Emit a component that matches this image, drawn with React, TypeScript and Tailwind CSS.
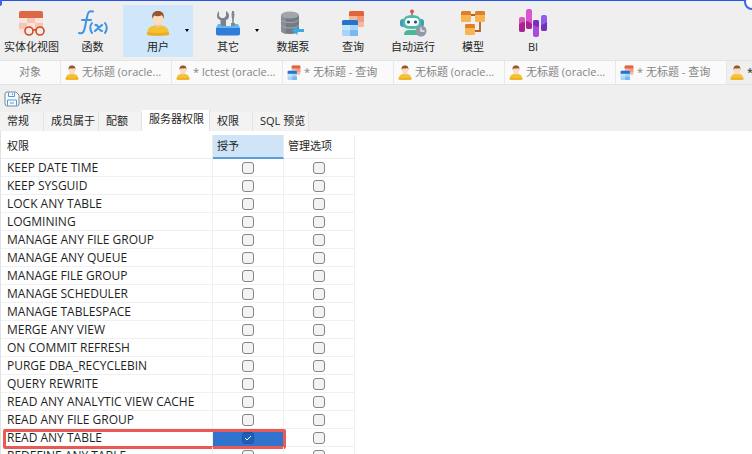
import type { ReactNode } from "react";

const PersonIcon = ({ className }: { className: string }) => (
  <svg viewBox="0 0 24 26" className={className} aria-hidden="true">
    <path d="M1 25c0-6 2-8.500 8-9.500h6c6 1 8 3.500 8 9.500q-11 1.500-22 0z" fill="#f5c22f" />
    <path d="M1.300 22c7 1.500 14.500 1.500 21.400 0l.3 3q-11 1.500-22 0z" fill="#e9ad1e" />
    <path d="M9 11h6v5q-3 3-6 0z" fill="#efc49c" />
    <ellipse cx="12" cy="9" rx="5.300" ry="6.300" fill="#fbdcbd" />
    <path d="M6.500 9C5 3.500 8 1 12 1s7 2.500 5.500 8c-.4-2-.8-3-1.700-3.700-2.800 1.200-5.300 1.200-7.300.2-1.200 1-1.600 1.700-2 3.500z" fill="#96562c" />
  </svg>
);

const QueryIcon = ({ className }: { className: string }) => (
  <svg viewBox="0 0 24 26" className={className} aria-hidden="true">
    <rect x="8" y="1" width="15" height="16" rx="1.500" fill="#f6b9a0" />
    <path d="M16 6h7v6h-7z" fill="#f29a7c" />
    <path d="M8 6V2.500Q8 1 9.500 1h12Q23 1 23 2.500V6z" fill="#e2633c" />
    <rect x="1" y="10" width="16" height="16" rx="1.500" fill="#a9d4f8" />
    <path d="M1 15h8v5H1z" fill="#c6e4fc" />
    <path d="M9 20h8v6H9z" fill="#79b9f2" />
    <path d="M1 15v-3.500Q1 10 2.500 10h13q1.500 0 1.500 1.500V15z" fill="#2373cf" />
  </svg>
);

const ViewIcon = () => (
  <svg viewBox="0 0 27 26" className="h-[26px] w-[27px]" aria-hidden="true">
    <path d="M1 7h24v15q0 2-2 2H3q-2 0-2-2z" fill="#fbe3dc" />
    <path d="M9 7h8v6H9zM17 13h8v7h-8zM1 13h8v6H1z" fill="#f4c6b7" />
    <path d="M1 8V3q0-2 2-2h20q2 0 2 2v5z" fill="#dd6846" />
    <g fill="#f7e9e4" stroke="#cf4a27" strokeWidth="1.600">
      <circle cx="11" cy="21" r="4" />
      <circle cx="22" cy="21" r="4" />
      <path d="M15 20.500q1.500-1.500 3 0" fill="none" />
    </g>
  </svg>
);

const FunctionIcon = () => (
  <svg viewBox="0 0 30 26" className="h-[26px] w-[30px]" fill="none" stroke="#3f95e4" strokeLinecap="round" aria-hidden="true">
    <path d="M1 23c4 1 5-1 6-6l2-10c.8-5 2.500-6.500 6-5.500M4 10h9" strokeWidth="2" />
    <path d="M14 13q-3.500 4.500 0 10M27 13q3.500 4.500 0 10" strokeWidth="2" />
    <path d="M17.500 15c3-1 3 6 6.500 6M24 15l-7 6" strokeWidth="2.200" />
  </svg>
);

const ToolsIcon = () => (
  <svg viewBox="0 0 26 26" className="size-[26px]" aria-hidden="true">
    <path d="M4 1v5l2 2h3l2-2V1q3 1.500 3 5 0 3-3 4v8H5.500v-8Q2 9 2 6q0-3.500 2-5z" fill="#7b848d" />
    <path d="M5.500 0v5l1.500 1.500h1.500L10 5V0" fill="#efefef" />
    <path d="M17 1h2l.5 4-.7 5v3h1.200v5h-4v-5h1.200v-3l-.7-5z" fill="#818a93" />
    <path d="M3 14h3v2h14v-2h3l2 4v5q0 2-2 2H3q-2 0-2-2v-5z" fill="#60b8f2" />
    <path d="M1 18h24v5.500q0 2-2 2H3q-2 0-2-2z" fill="#2f7dd8" />
  </svg>
);

const PumpIcon = () => (
  <svg viewBox="0 0 26 26" className="size-[26px]" aria-hidden="true">
    <path d="M1 5v15q0 4 9 4t9-4V5z" fill="#747b83" />
    <path d="M1 5v15q0 3 5 3.700V5z" fill="#878e95" />
    <path d="M1 9.500q2 3 9 3t9-3M1 15q2 3 9 3t9-3" fill="none" stroke="#a4aaaf" />
    <ellipse cx="10" cy="5" rx="9" ry="3.500" fill="#a0a6ab" />
    <path d="M12 20.500l5.500-4.500v3H24v3h-6.500v3z" fill="#3ea8ea" />
  </svg>
);

const RobotIcon = () => (
  <svg viewBox="0 0 28 28" className="size-[28px]" aria-hidden="true">
    <path d="M13 3v5" stroke="#9a6370" strokeWidth="1.500" />
    <circle cx="13" cy="2.500" r="2" fill="#e05450" />
    <rect x="1" y="10" width="24" height="8" rx="3" fill="#3d9fb6" />
    <path d="M4 13q0-7 9-7t9 7v3q0 4-9 4t-9-4z" fill="#4fb8a7" />
    <rect x="6" y="9" width="14" height="8" rx="4" fill="#f4fbfa" />
    <circle cx="9.500" cy="13" r="1.600" fill="#264c78" />
    <circle cx="16.500" cy="13" r="1.600" fill="#264c78" />
    <path d="M5 26q0-5 5-5h8v5z" fill="#4cb695" />
    <circle cx="22" cy="22" r="5.500" fill="#9099a6" />
    <path d="M22 18.500V22h3.500" fill="none" stroke="#e9edf1" strokeWidth="1.300" />
  </svg>
);

const ModelIcon = () => (
  <svg viewBox="0 0 26 26" className="size-[26px]" aria-hidden="true">
    <path d="M9 5h9M20 9v12h-6" fill="none" stroke="#a9652a" strokeWidth="1.800" />
    <g fill="#f8b44f">
      <rect x="1" y="1" width="10" height="11" rx="1.500" />
      <rect x="15" y="1" width="10" height="11" rx="1.500" />
      <rect x="5" y="14" width="10" height="11" rx="1.500" />
    </g>
    <path d="M1 5V2.500Q1 1 2.500 1h7Q11 1 11 2.500V5zM15 5V2.500Q15 1 16.500 1h7Q25 1 25 2.500V5zM5 18v-2.500Q5 14 6.500 14h7q1.500 0 1.500 1.500V18z" fill="#dc8129" />
  </svg>
);

const BiIcon = () => (
  <svg viewBox="0 0 30 28" className="h-[28px] w-[30px]" aria-hidden="true">
    <rect x="1" y="8" width="6" height="15" rx="2" fill="#d957b8" />
    <rect x="8" y="0" width="6" height="20" rx="2" fill="#dc55d0" />
    <rect x="15" y="11" width="6" height="17" rx="2" fill="#a94be2" />
    <rect x="23" y="6" width="6" height="16" rx="2" fill="#8f5ded" />
    <path d="M1 15q3-2 6-2v8q0 2-2 2H3q-2 0-2-2zM8 12q3 0 6 3v3q0 2-2 2h-2q-2 0-2-2z" fill="#a9248f" />
    <path d="M15 16q3 2 6 2v-5q0-2-2-2h-2q-2 0-2 2zM23 16q3-.5 6-3v7q0 2-2 2h-2q-2 0-2-2z" fill="#7531bd" />
  </svg>
);

const SaveIcon = () => (
  <svg viewBox="0 0 16 16" className="size-4" fill="none" aria-hidden="true">
    <path d="M1 3q0-2 2-2h9l3 3v9q0 2-2 2H3q-2 0-2-2z" fill="#f5f9fd" stroke="#7d8892" />
    <path d="M4.500 1.500v4h6v-4M3.500 14.500V9h9v5.500" stroke="#4c9be0" />
    <path d="M8.500 2.500V4M6 12h4" stroke="#4c9be0" />
  </svg>
);

type Tool = { label: string; icon: ReactNode; width: string; active?: boolean; menu?: boolean };

const tools: Tool[] = [
  { label: "实体化视图", icon: <ViewIcon />, width: "w-[61px]" },
  { label: "函数", icon: <FunctionIcon />, width: "w-[61px]" },
  { label: "用户", icon: <PersonIcon className="h-[26px] w-[24px]" />, width: "w-[70px]", active: true, menu: true },
  { label: "其它", icon: <ToolsIcon />, width: "w-[70px]", menu: true },
  { label: "数据泵", icon: <PumpIcon />, width: "w-[60px]" },
  { label: "查询", icon: <QueryIcon className="h-[26px] w-[24px]" />, width: "w-[60px]" },
  { label: "自动运行", icon: <RobotIcon />, width: "w-[60px]" },
  { label: "模型", icon: <ModelIcon />, width: "w-[60px]" },
  { label: "BI", icon: <BiIcon />, width: "w-[60px]" },
];

const documents = [
  { label: "无标题 (oracle...", query: false },
  { label: "* lctest (oracle...", query: false },
  { label: "* 无标题 - 查询", query: true },
  { label: "无标题 (oracle...", query: false },
  { label: "无标题 (oracle...", query: false },
  { label: "* 无标题 - 查询", query: true },
];

const privileges = [
  "KEEP DATE TIME",
  "KEEP SYSGUID",
  "LOCK ANY TABLE",
  "LOGMINING",
  "MANAGE ANY FILE GROUP",
  "MANAGE ANY QUEUE",
  "MANAGE FILE GROUP",
  "MANAGE SCHEDULER",
  "MANAGE TABLESPACE",
  "MERGE ANY VIEW",
  "ON COMMIT REFRESH",
  "PURGE DBA_RECYCLEBIN",
  "QUERY REWRITE",
  "READ ANY ANALYTIC VIEW CACHE",
  "READ ANY FILE GROUP",
  "READ ANY TABLE",
  "REDEFINE ANY TABLE",
];

const Tick = ({ label, checked = false }: { label: string; checked?: boolean }) => (
  <span className="relative flex items-center justify-center">
    <input
      type="checkbox"
      aria-label={label}
      defaultChecked={checked}
      className="peer size-3 appearance-none rounded-[3px] border border-[#858585] bg-[#f3f3f3] checked:border-[#1c56a8] checked:bg-[#1f5fb8]"
    />
    <svg viewBox="0 0 12 12" className="pointer-events-none absolute hidden size-3 peer-checked:block" aria-hidden="true">
      <path d="M3 6l2 2 4-4" fill="none" stroke="#fff" />
    </svg>
  </span>
);

const Toolbar = () => (
  <div className="flex border-t border-[#2454e8] pt-1 pb-[3px] pl-px">
    {tools.map((tool) => (
      <button
        key={tool.label}
        className={`relative flex h-[52px] shrink-0 flex-col items-center justify-between pt-1 pb-0.5 whitespace-nowrap ${tool.width} ${tool.active ? "bg-[#cfe6fb]" : ""}`}
      >
        <span className="flex h-7 items-center">{tool.icon}</span>
        <span className="leading-4">{tool.label}</span>
        {tool.menu && <span className="absolute top-6 right-1 border-x-2 border-t-3 border-x-transparent border-t-black" />}
      </button>
    ))}
  </div>
);

const DocumentTabs = () => (
  <div className="flex h-[25px] overflow-hidden border-y border-[#e4e4e4] bg-[#fafafa] text-[#858585]">
    <button className="w-[61px] shrink-0 border-r border-[#e8e8e8]">对象</button>
    {documents.map((doc, i) => (
      <button key={i} className="flex w-[111px] shrink-0 items-center gap-[3px] border-r border-[#e8e8e8] pl-1 whitespace-nowrap">
        {doc.query ? <QueryIcon className="h-[15px] w-[14px]" /> : <PersonIcon className="h-[15px] w-[14px]" />}
        {doc.label}
      </button>
    ))}
    <button className="flex flex-1 items-center gap-[3px] bg-[#efefef] pl-[3px] text-[#222]">
      <PersonIcon className="h-[15px] w-[14px] shrink-0" />*
    </button>
  </div>
);

const sections = [
  { label: "常规", width: "w-[44px]" },
  { label: "成员属于", width: "w-[55px]" },
  { label: "配额", width: "w-[43px]" },
  { label: "服务器权限", width: "w-[68px]", active: true },
  { label: "权限", width: "w-[43px]" },
  { label: "SQL 预览", width: "w-[56px]" },
];

const App = () => {
  return (
    <main className="relative flex h-screen flex-col overflow-hidden bg-[#efefef] font-['Open_Sans','Noto_Sans_CJK_SC',sans-serif] text-[11px] text-[#1f1f1f]">
      <Toolbar />
      <span className="absolute top-0 left-0 h-1.5 w-0.5 rounded-br-full bg-[#3b66ea]" />
      <span className="absolute -top-1.5 -right-2 size-4 rounded-full border-2 border-[#3b66ea] bg-white" />
      <DocumentTabs />

      <div className="flex h-[25px] items-center pt-[3px] pl-1">
        <button className="flex items-center">
          <SaveIcon />
          保存
        </button>
      </div>

      <div className="flex h-[21px] items-end">
        {sections.map((section) => (
          <button
            key={section.label}
            className={`shrink-0 border-r border-[#e2e2e2] pl-[7px] text-left whitespace-nowrap ${section.width} ${section.active ? "h-[21px] bg-white pb-0.5" : "h-[19px] bg-[#f3f3f3]"}`}
          >
            {section.label}
          </button>
        ))}
      </div>

      <div className="flex-1 overflow-hidden border-l border-[#e2e2e2] bg-white pt-1">
        <table className="table-fixed border-separate border-spacing-0">
          <thead>
            <tr className="h-6 text-left">
              <th className="w-[212px] border-r border-b border-[#ececec] pl-1.5 font-normal">权限</th>
              <th className="w-[71px] border-r border-b-2 border-r-[#ececec] border-b-[#5a9fd8] bg-[#d0e4f7] pl-1 font-normal">授予</th>
              <th className="w-[71px] border-r border-b border-[#ececec] pl-1 font-normal">管理选项</th>
            </tr>
          </thead>
          <tbody>
            {privileges.map((name) => {
              const selected = name === "READ ANY TABLE";
              return (
                <tr key={name} className="relative h-[18px]">
                  <td className="border-r border-b border-[#f0f0f0] p-0 pl-1.5 text-[12px] leading-4 whitespace-nowrap">
                    {name}
                    {selected && <span className="pointer-events-none absolute top-0 left-0.5 h-5 w-[283px] rounded-xs border-3 border-[#e85a55]" />}
                  </td>
                  <td className={`border-r border-b border-[#f0f0f0] p-0 ${selected ? "bg-[#2f73cf]" : ""}`}>
                    <Tick label={`${name} 授予`} checked={selected} />
                  </td>
                  <td className="border-r border-b border-[#f0f0f0] p-0">
                    <Tick label={`${name} 管理选项`} />
                  </td>
                </tr>
              );
            })}
          </tbody>
        </table>
      </div>
    </main>
  );
};

export default App;
